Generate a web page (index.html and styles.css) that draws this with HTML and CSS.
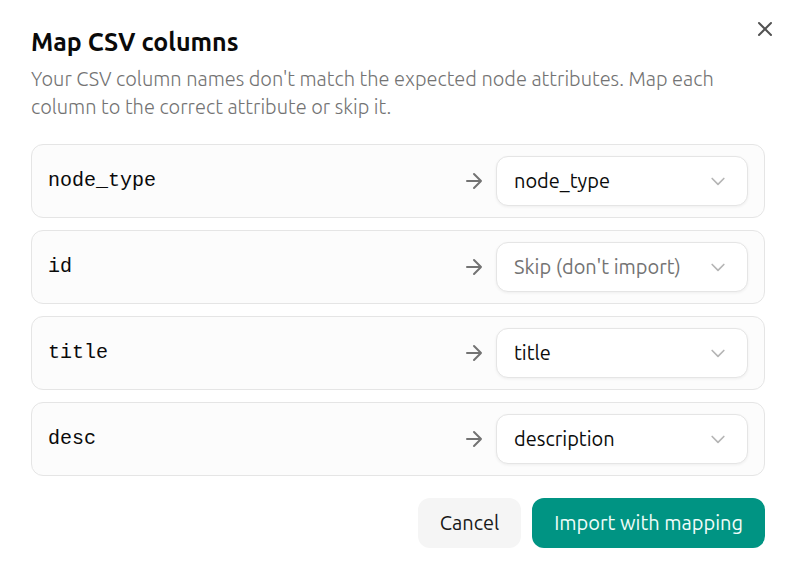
FILE: index.html
```html
<!DOCTYPE html>
<html lang="en">
<head>
    <meta charset="UTF-8">
    <meta name="viewport" content="width=device-width, initial-scale=1.0">
    <title>Map CSV columns</title>
    <link rel="stylesheet" href="styles.css">
</head>
<body>
    <main class="dialog" role="dialog" aria-labelledby="dialog-title" aria-describedby="dialog-description">
        <button type="button" class="close-btn" aria-label="Close">
            <svg class="icon" viewBox="0 0 24 24" aria-hidden="true"><path d="M18 6 6 18M6 6l12 12"/></svg>
        </button>

        <header class="dialog-header">
            <h1 id="dialog-title" class="dialog-title">Map CSV columns</h1>
            <p id="dialog-description" class="dialog-description">Your CSV column names don't match the expected node attributes. Map each column to the correct attribute or skip it.</p>
        </header>

        <form class="mapping-form">
            <div class="mapping-list">
                <div class="mapping-row">
                    <label class="column-name" for="map-node-type">node_type</label>
                    <svg class="icon arrow" viewBox="0 0 24 24" aria-hidden="true"><path d="M5 12h14M12 5l7 7-7 7"/></svg>
                    <div class="select-wrap">
                        <select id="map-node-type" class="attribute-select">
                            <option value="">Skip (don't import)</option>
                            <option selected>node_type</option>
                            <option>title</option>
                            <option>description</option>
                        </select>
                        <svg class="icon chevron" viewBox="0 0 24 24" aria-hidden="true"><path d="m5 9 7 7 7-7"/></svg>
                    </div>
                </div>
                <div class="mapping-row">
                    <label class="column-name" for="map-id">id</label>
                    <svg class="icon arrow" viewBox="0 0 24 24" aria-hidden="true"><path d="M5 12h14M12 5l7 7-7 7"/></svg>
                    <div class="select-wrap">
                        <select id="map-id" class="attribute-select skipped">
                            <option value="" selected>Skip (don't import)</option>
                            <option>node_type</option>
                            <option>title</option>
                            <option>description</option>
                        </select>
                        <svg class="icon chevron" viewBox="0 0 24 24" aria-hidden="true"><path d="m5 9 7 7 7-7"/></svg>
                    </div>
                </div>
                <div class="mapping-row">
                    <label class="column-name" for="map-title">title</label>
                    <svg class="icon arrow" viewBox="0 0 24 24" aria-hidden="true"><path d="M5 12h14M12 5l7 7-7 7"/></svg>
                    <div class="select-wrap">
                        <select id="map-title" class="attribute-select">
                            <option value="">Skip (don't import)</option>
                            <option>node_type</option>
                            <option selected>title</option>
                            <option>description</option>
                        </select>
                        <svg class="icon chevron" viewBox="0 0 24 24" aria-hidden="true"><path d="m5 9 7 7 7-7"/></svg>
                    </div>
                </div>
                <div class="mapping-row">
                    <label class="column-name" for="map-desc">desc</label>
                    <svg class="icon arrow" viewBox="0 0 24 24" aria-hidden="true"><path d="M5 12h14M12 5l7 7-7 7"/></svg>
                    <div class="select-wrap">
                        <select id="map-desc" class="attribute-select">
                            <option value="">Skip (don't import)</option>
                            <option>node_type</option>
                            <option>title</option>
                            <option selected>description</option>
                        </select>
                        <svg class="icon chevron" viewBox="0 0 24 24" aria-hidden="true"><path d="m5 9 7 7 7-7"/></svg>
                    </div>
                </div>
            </div>

            <footer class="dialog-footer">
                <button type="button" class="btn btn-secondary">Cancel</button>
                <button type="submit" class="btn btn-primary">Import with mapping</button>
            </footer>
        </form>
    </main>
</body>
</html>
```
FILE: styles.css
```css
:root {
    --primary-color: #009483;
    --text-color: #0a0a0a;
    --muted-color: #737373;
    --border-color: #e5e5e5;
    --row-color: #fcfcfc;
    --radius: 12px;
}

* {
    box-sizing: border-box;
}

body {
    margin: 0;
    background: white;
    color: var(--text-color);
    font-family: Ubuntu, 'Noto Sans', sans-serif;
    font-size: 20px;
    line-height: 28px;
}

.dialog {
    position: relative;
    padding: 28px 33px 28px 31px;
}

.icon {
    flex: none;
    width: 24px;
    height: 24px;
    fill: none;
    stroke: currentColor;
    stroke-width: 2;
    stroke-linecap: round;
    stroke-linejoin: round;
}

.close-btn {
    position: absolute;
    top: 17px;
    right: 21px;
    display: flex;
    padding: 0;
    border: none;
    background: none;
    color: #525252;
    cursor: pointer;
}

.dialog-title {
    margin: 0 0 9px;
    font-size: 25px;
    font-weight: 600;
    line-height: 28px;
}

.dialog-description {
    margin: 0;
    font-weight: 300;
    color: var(--muted-color);
}

.mapping-list {
    display: flex;
    flex-direction: column;
    gap: 12px;
    margin: 23px 0 22px;
}

.mapping-row {
    display: flex;
    align-items: center;
    gap: 10px;
    padding: 11px 16px;
    border: 1px solid var(--border-color);
    border-radius: var(--radius);
    background: var(--row-color);
}

.column-name {
    flex: 1;
    font-family: 'Liberation Mono', monospace;
    font-size: 20px;
}

.arrow {
    color: var(--muted-color);
}

.select-wrap {
    position: relative;
    width: 252px;
}

.attribute-select {
    display: block;
    width: 100%;
    height: 50px;
    padding: 0 48px 0 17px;
    border: 1px solid var(--border-color);
    border-radius: var(--radius);
    background: white;
    box-shadow: 0 1px 3px rgba(0, 0, 0, 0.06);
    color: inherit;
    font: inherit;
    appearance: none;
}

.attribute-select.skipped {
    color: var(--muted-color);
}

.chevron {
    position: absolute;
    top: 15px;
    right: 20px;
    width: 20px;
    height: 20px;
    color: #b5b5b5;
    pointer-events: none;
}

.dialog-footer {
    display: flex;
    justify-content: flex-end;
    gap: 11px;
}

.btn {
    height: 50px;
    padding: 0 22px;
    border: none;
    border-radius: var(--radius);
    font: inherit;
    cursor: pointer;
}

.btn-secondary {
    background: #f5f5f5;
    color: #171717;
}

.btn-primary {
    background: var(--primary-color);
    color: #f0fdfa;
}

.btn:focus-visible,
.close-btn:focus-visible,
.attribute-select:focus-visible {
    outline: 2px solid var(--primary-color);
    outline-offset: 2px;
}
```
